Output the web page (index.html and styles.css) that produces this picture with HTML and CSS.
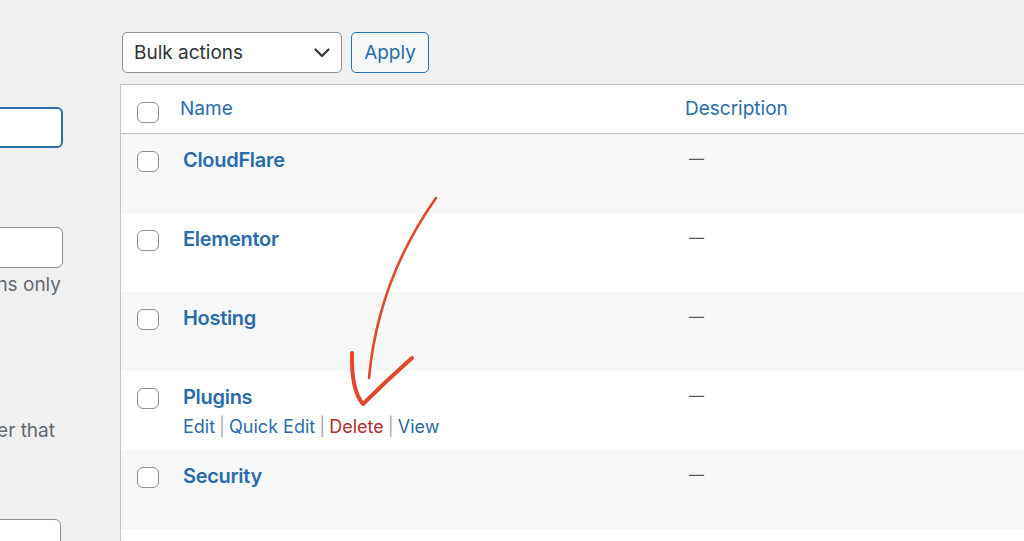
FILE: index.html
```html
<!DOCTYPE html>
<html lang="en">
<head>
  <meta charset="UTF-8">
  <meta name="viewport" content="width=device-width, initial-scale=1.0">
  <title>Categories</title>
  <link rel="stylesheet" href="styles.css">
</head>
<body>
  <div class="col-wrap">
    <div class="col-left">
      <div class="form-wrap">
        <div class="form-field field-name">
          <label for="tag-name">Name</label>
          <input type="text" id="tag-name" class="focused">
          <p class="short">How it appears on your site.</p>
        </div>
        <div class="form-field field-slug">
          <label for="tag-slug">Slug</label>
          <input type="text" id="tag-slug">
          <p class="description">It is usually all lowercase and contains letters, numbers and hyphens only</p>
        </div>
        <div class="form-field field-parent">
          <label for="parent">Parent Category</label>
          <p class="description">Categories can have a hierarchy. You might have a Jazz category, and under that</p>
        </div>
        <div class="form-field field-desc">
          <label for="tag-description">Description</label>
          <textarea id="tag-description" rows="3"></textarea>
        </div>
      </div>
    </div>

    <div class="col-right">
      <div class="tablenav">
        <div class="select">
          <span>Bulk actions</span>
          <svg width="16" height="10" viewBox="0 0 16 10"><path d="M1.5 1.5 L8 8 L14.5 1.5" fill="none" stroke="#2c3338" stroke-width="2.2" stroke-linecap="round" stroke-linejoin="round"/></svg>
        </div>
        <button class="button">Apply</button>
      </div>

      <table class="list-table">
        <colgroup>
          <col class="c-check">
          <col class="c-name">
          <col>
        </colgroup>
        <thead>
          <tr>
            <td class="check-column"><span class="cb"></span></td>
            <th class="th-name"><a href="#">Name</a></th>
            <th class="th-desc"><a href="#">Description</a></th>
          </tr>
        </thead>
        <tbody>
          <tr class="alt">
            <th class="check-column"><span class="cb"></span></th>
            <td class="title"><strong><a class="row-title" href="#">CloudFlare</a></strong><div class="row-actions"></div></td>
            <td class="desc"><span class="no-desc">—</span></td>
          </tr>
          <tr>
            <th class="check-column"><span class="cb"></span></th>
            <td class="title"><strong><a class="row-title" href="#">Elementor</a></strong><div class="row-actions"></div></td>
            <td class="desc"><span class="no-desc">—</span></td>
          </tr>
          <tr class="alt">
            <th class="check-column"><span class="cb"></span></th>
            <td class="title"><strong><a class="row-title" href="#">Hosting</a></strong><div class="row-actions"></div></td>
            <td class="desc"><span class="no-desc">—</span></td>
          </tr>
          <tr>
            <th class="check-column"><span class="cb"></span></th>
            <td class="title">
              <strong><a class="row-title" href="#">Plugins</a></strong>
              <div class="row-actions visible">
                <a href="#">Edit</a><span class="sep">|</span><a href="#">Quick Edit</a><span class="sep">|</span><a href="#" class="delete">Delete</a><span class="sep">|</span><a href="#">View</a>
              </div>
            </td>
            <td class="desc"><span class="no-desc">—</span></td>
          </tr>
          <tr class="alt">
            <th class="check-column"><span class="cb"></span></th>
            <td class="title"><strong><a class="row-title" href="#">Security</a></strong><div class="row-actions"></div></td>
            <td class="desc"><span class="no-desc">—</span></td>
          </tr>
          <tr>
            <th class="check-column"><span class="cb"></span></th>
            <td class="title"><strong><a class="row-title" href="#">Uncategorized</a></strong><div class="row-actions"></div></td>
            <td class="desc"><span class="no-desc">—</span></td>
          </tr>
        </tbody>
      </table>
    </div>
  </div>

  <!-- hand-drawn annotation -->
  <svg class="annotation" width="1024" height="541" viewBox="0 0 1024 541">
    <path d="M436 198 Q 378 280 369 378" fill="none" stroke="#e2482b" stroke-width="2.6" stroke-linecap="round"/>
    <path d="M352 353 Q 351 390 363 404 Q 386 381 412 358" fill="none" stroke="#e2482b" stroke-width="4" stroke-linecap="round" stroke-linejoin="round"/>
  </svg>
</body>
</html>
```

FILE: styles.css
```css
body {
  margin: 0;
  background: #f0f0f1;
  color: #3c434a;
  font-family: "Inter", "Liberation Sans", sans-serif;
  font-size: 19px;
  overflow: hidden;
  height: 541px;
}

a {
  color: #2a6cab;
  text-decoration: none;
}

.col-wrap {
  display: flex;
  gap: 56px;
  padding-top: 32px;
}

/* ───────────── left form (mostly cut off) ───────────── */
.col-left {
  width: 64px;
  flex-shrink: 0;
  overflow: hidden;
}

.form-wrap {
  width: 760px;
  margin-left: -696px;
}

.form-field label {
  display: block;
  height: 24px;
  line-height: 24px;
  color: #1d2327;
}

.form-field input,
.form-field textarea {
  display: block;
  box-sizing: border-box;
  width: 759px;
  height: 41px;
  margin: 0;
  border: 1px solid #8c8f94;
  border-radius: 6px;
  background: #fff;
}

.form-field input.focused {
  border: 2px solid #2a6fac;
}

.form-field p {
  margin: 0;
  line-height: 18px;
  white-space: nowrap;
  color: #646970;
}

.form-field .short {
  text-align: left;
  margin-top: 8px;
}

.form-field .description {
  text-align: right;
  padding-right: 3px;
}

.field-name {
  margin-top: 51px;
}

.field-slug {
  margin-top: 29px;
}

.field-slug .description {
  margin-top: 8px;
}

.field-parent {
  margin-top: 104px;
}

.field-parent .description {
  padding-right: 9px;
}

.field-desc {
  margin-top: 55px;
}

.field-desc textarea {
  width: 757px;
  height: 90px;
  resize: none;
}

/* ───────────── right column ───────────── */
.col-right {
  flex: 1;
}

.tablenav {
  display: flex;
  gap: 9px;
  margin-left: 2px;
  margin-bottom: 11px;
}

.select {
  box-sizing: border-box;
  width: 220px;
  height: 41px;
  padding: 0 11px 0 11px;
  border: 1px solid #8c8f94;
  border-radius: 5px;
  background: #fff;
  color: #2c3338;
  display: flex;
  align-items: center;
  justify-content: space-between;
}

.button {
  box-sizing: border-box;
  width: 78px;
  height: 41px;
  border: 1px solid #2271b1;
  border-radius: 5px;
  background: #f6f7f7;
  color: #2a6cab;
  font-family: inherit;
  font-size: 19px;
  padding: 0;
}

.list-table {
  width: 1000px;
  table-layout: fixed;
  border-collapse: separate;
  border-spacing: 0;
  border: 1px solid #c3c4c7;
  border-bottom: none;
  background: #fff;
}

.c-check {
  width: 48px;
}

.c-name {
  width: 506px;
}

.list-table th,
.list-table td {
  text-align: left;
  vertical-align: top;
  font-weight: normal;
  padding: 12px 12px;
}

.list-table thead td,
.list-table thead th {
  height: 24px;
  line-height: 24px;
  border-bottom: 1px solid #c3c4c7;
}

.list-table .th-name {
  padding-left: 11px;
}

.list-table .th-desc {
  padding-left: 10px;
}

.list-table .check-column {
  padding: 17px 0 0 16px;
}

.cb {
  display: block;
  box-sizing: border-box;
  width: 22px;
  height: 21px;
  border: 1px solid #8c8f94;
  border-radius: 6px;
  background: #fff;
}

tbody tr {
  height: 79px;
}

tbody tr.alt {
  background: #f6f7f7;
}

.list-table td.title {
  padding: 12px 12px 10px 14px;
}

.row-title {
  font-size: 20px;
  font-weight: 600;
  letter-spacing: -0.3px;
  line-height: 28px;
}

.list-table strong {
  display: block;
  font-weight: 600;
  height: 28px;
}

.row-actions {
  height: 27px;
  margin-top: 2px;
  line-height: 27px;
  font-size: 18px;
}

.row-actions .sep {
  color: #a7aaad;
  margin: 0 4px;
}

.row-actions .delete {
  color: #b32d2e;
}

.list-table td.desc {
  padding-left: 14px;
  padding-top: 11px;
}

.no-desc {
  display: inline-block;
  font-size: 15px;
  line-height: 28px;
  color: #50575e;
}

/* ───────────── annotation ───────────── */
.annotation {
  position: absolute;
  left: 0;
  top: 0;
  pointer-events: none;
}
```
